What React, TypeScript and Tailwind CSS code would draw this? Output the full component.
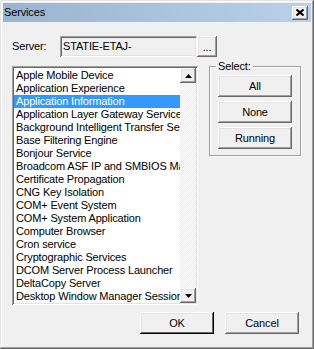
const services = [
  "Apple Mobile Device",
  "Application Experience",
  "Application Information",
  "Application Layer Gateway Service",
  "Background Intelligent Transfer Service",
  "Base Filtering Engine",
  "Bonjour Service",
  "Broadcom ASF IP and SMBIOS Mailbox Monitor",
  "Certificate Propagation",
  "CNG Key Isolation",
  "COM+ Event System",
  "COM+ System Application",
  "Computer Browser",
  "Cron service",
  "Cryptographic Services",
  "DCOM Server Process Launcher",
  "DeltaCopy Server",
  "Desktop Window Manager Session Manager",
];

const raised =
  "bg-[#f0f0f0] shadow-[inset_-1px_-1px_#696969,inset_1px_1px_#fff,inset_-2px_-2px_#a0a0a0,inset_2px_2px_#e3e3e3]";
const sunken =
  "shadow-[inset_1px_1px_#a0a0a0,inset_-1px_-1px_#fff,inset_2px_2px_#696969,inset_-2px_-2px_#e3e3e3]";

function Arrow({ up }: { up?: boolean }) {
  return (
    <svg width="7" height="4" viewBox="0 0 7 4">
      <path d={up ? "M3.5 0L7 4H0Z" : "M0 0H7L3.5 4Z"} fill="#000" />
    </svg>
  );
}

function WinButton({ label, isDefault }: { label: string; isDefault?: boolean }) {
  const frame = isDefault
    ? "bg-[#f0f0f0] shadow-[inset_-1px_-1px_#000,inset_1px_1px_#fff,inset_-2px_-2px_#696969,inset_2px_2px_#e3e3e3]"
    : raised;
  return (
    <button className={`w-[74px] h-[22px] flex items-center justify-center text-[11px] text-black ${frame}`}>
      {label}
    </button>
  );
}

export default function App() {
  return (
    <div
      className="w-[314px] h-[349px] bg-[#f0f0f0] p-[3px] flex flex-col shadow-[inset_-1px_-1px_#696969,inset_1px_1px_#e3e3e3,inset_-2px_-2px_#a0a0a0,inset_2px_2px_#fff] text-black tracking-[-0.15px]"
      style={{ fontFamily: '"Liberation Sans", Arial, sans-serif' }}
    >
      {/* Title bar */}
      <div className="h-[19px] flex items-center justify-between pl-[1px] pr-[3px] bg-gradient-to-r from-[#99b4d1] to-[#b9d1ea]">
        <span className="text-[11px]">Services</span>
        <button className={`w-[16px] h-[14px] flex items-center justify-center ${raised}`}>
          <svg width="8" height="7" viewBox="0 0 8 7">
            <path d="M0.5 0.5L7.5 6.5M7.5 0.5L0.5 6.5" stroke="#000" strokeWidth="2" />
          </svg>
        </button>
      </div>

      <div className="pl-[9px] flex flex-col">
        {/* Server row */}
        <div className="mt-[14px] h-[21px] flex items-center">
          <span className="text-[11px] w-[48px]">Server:</span>
          <div className={`w-[137px] h-[21px] bg-[#f0f0f0] ${sunken} flex items-center pl-[3px] text-[11px]`}>
            STATIE-ETAJ-
          </div>
          <button className={`w-[20px] h-[21px] flex items-end justify-center pb-[4px] text-[11px] leading-none ${raised}`}>
            ...
          </button>
        </div>

        {/* List + Select group */}
        <div className="mt-[9px] flex items-start">
          <div className={`w-[186px] h-[239px] bg-white p-[2px] flex ${sunken}`}>
            <div className="flex-1 overflow-hidden pt-[1px]">
              {services.map((s, i) => (
                <div
                  key={s}
                  className={`h-[13px] leading-[13px] text-[11px] pl-[2px] whitespace-nowrap ${
                    i === 2 ? "bg-[#3399ff] text-white" : ""
                  }`}
                >
                  {s}
                </div>
              ))}
            </div>
            <div className="w-[16px] flex flex-col">
              <div className={`h-[15px] flex items-center justify-center ${raised}`}>
                <Arrow up />
              </div>
              <div className="flex-1 bg-[conic-gradient(#fff_25%,#ececec_0_50%,#fff_0_75%,#ececec_0)] bg-[length:2px_2px]" />
              <div className={`h-[15px] flex items-center justify-center ${raised}`}>
                <Arrow />
              </div>
            </div>
          </div>

          <div className="relative ml-[11px] w-[92px] h-[90px] border border-[#a0a0a0] shadow-[inset_1px_1px_#fff,1px_1px_#fff] flex flex-col items-start pl-[8px] pt-[8px] gap-[4px]">
            <span className="absolute -top-[7px] left-[6px] px-[2px] bg-[#f0f0f0] text-[11px] leading-[13px]">
              Select:
            </span>
            <WinButton label="All" />
            <WinButton label="None" />
            <WinButton label="Running" />
          </div>
        </div>

        {/* Bottom buttons */}
        <div className="mt-[7px] flex items-center gap-[11px] ml-[128px]">
          <WinButton label="OK" isDefault />
          <WinButton label="Cancel" />
        </div>
      </div>
    </div>
  );
}
